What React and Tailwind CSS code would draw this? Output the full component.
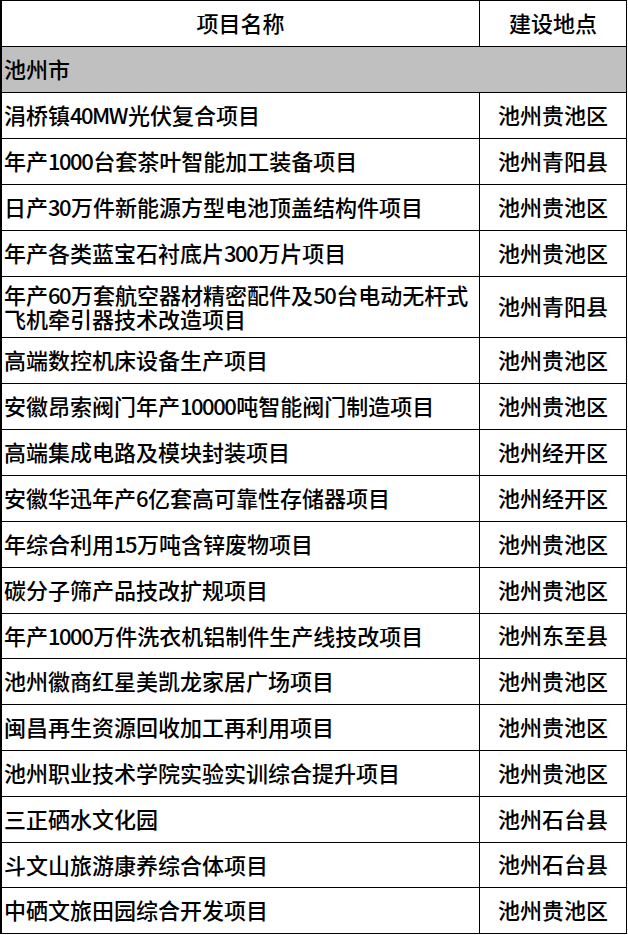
import React from "react";

const rows = [
  ["涓桥镇40MW光伏复合项目", "池州贵池区", 46],
  ["年产1000台套茶叶智能加工装备项目", "池州青阳县", 46],
  ["日产30万件新能源方型电池顶盖结构件项目", "池州贵池区", 46],
  ["年产各类蓝宝石衬底片300万片项目", "池州贵池区", 46],
  [["年产60万套航空器材精密配件及50台电动无杆式", "飞机牵引器技术改造项目"], "池州青阳县", 61],
  ["高端数控机床设备生产项目", "池州贵池区", 46],
  ["安徽昂索阀门年产10000吨智能阀门制造项目", "池州贵池区", 46],
  ["高端集成电路及模块封装项目", "池州经开区", 46],
  ["安徽华迅年产6亿套高可靠性存储器项目", "池州经开区", 46],
  ["年综合利用15万吨含锌废物项目", "池州贵池区", 46],
  ["碳分子筛产品技改扩规项目", "池州贵池区", 46],
  ["年产1000万件洗衣机铝制件生产线技改项目", "池州东至县", 45],
  ["池州徽商红星美凯龙家居广场项目", "池州贵池区", 46],
  ["闽昌再生资源回收加工再利用项目", "池州贵池区", 46],
  ["池州职业技术学院实验实训综合提升项目", "池州贵池区", 46],
  ["三正硒水文化园", "池州石台县", 46],
  ["斗文山旅游康养综合体项目", "池州石台县", 45],
  ["中硒文旅田园综合开发项目", "池州贵池区", 46],
];

function Text({ s }) {
  const parts = s.split(/([0-9A-Za-z]+)/);
  return (
    <>
      {parts.map((p, i) =>
        /^[0-9A-Za-z]+$/.test(p) ? (
          <span key={i} className="tracking-[-1.5px] pr-[1px]">{p}</span>
        ) : (
          <span key={i}>{p}</span>
        )
      )}
    </>
  );
}

function Row({ name, place, h }) {
  const heights = { 46: "h-[46px]", 45: "h-[45px]", 61: "h-[61px]" };
  return (
    <div className={`flex ${heights[h]} border-b border-black`}>
      <div className="w-[478px] border-r border-black flex flex-col justify-center pl-[2px] pb-[3px] leading-[24px]">
        {Array.isArray(name) ? (
          name.map((l, i) => (
            <div key={i}>
              <Text s={l} />
            </div>
          ))
        ) : (
          <div>
            <Text s={name} />
          </div>
        )}
      </div>
      <div className="w-[147px] border-r border-black flex items-center justify-center pb-[3px]">{place}</div>
    </div>
  );
}

export default function App() {
  return (
    <div
      className="w-[628px] bg-white text-black text-[22px] font-medium"
      style={{ fontFamily: '"Noto Sans CJK SC", "Noto Sans", sans-serif' }}
    >
      <div className="w-[627px] border-l-2 border-t border-black">
        <div className="flex h-[46px] border-b border-black">
          <div className="w-[478px] border-r border-black flex items-center justify-center pb-[3px]">项目名称</div>
          <div className="w-[147px] border-r border-black flex items-center justify-center pb-[3px]">建设地点</div>
        </div>
        <div className="flex h-[46px] border-b border-black bg-[#c0c0c0]">
          <div className="w-[625px] border-r border-black flex items-center pl-[2px] pb-[3px]">池州市</div>
        </div>
        {rows.map(([n, p, h], i) => (
          <Row key={i} name={n} place={p} h={h} />
        ))}
      </div>
    </div>
  );
}
